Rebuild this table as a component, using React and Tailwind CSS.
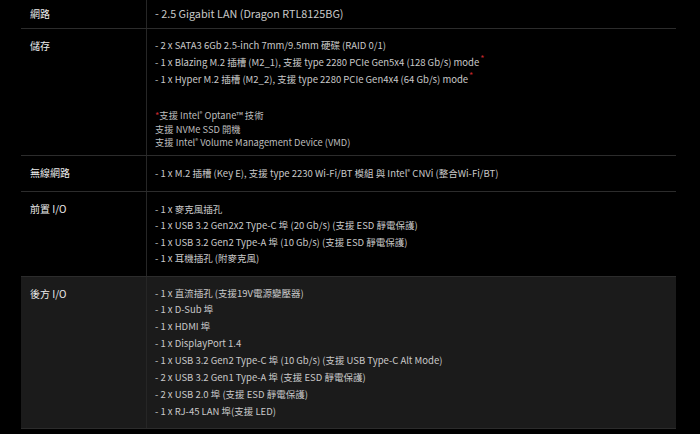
const rows = [
  {
    label: "網路",
    lines: ["- 2.5 Gigabit LAN (Dragon RTL8125BG)"],
  },
  {
    label: "儲存",
    lines: [
      "- 2 x SATA3 6Gb 2.5-inch 7mm/9.5mm 硬碟 (RAID 0/1)",
      <>
        - 1 x Blazing M.2 插槽 (M2_1), 支援 type 2280 PCIe Gen5x4 (128 Gb/s) mode
        <Star />
      </>,
      <>
        - 1 x Hyper M.2 插槽 (M2_2), 支援 type 2280 PCIe Gen4x4 (64 Gb/s) mode
        <Star />
      </>,
    ],
    notes: true,
  },
  {
    label: "無線網路",
    lines: [
      <>
        - 1 x M.2 插槽 (Key E), 支援 type 2230 Wi-Fi/BT 模組 與 Intel<Reg /> CNVi (整合Wi-Fi/BT)
      </>,
    ],
  },
  {
    label: "前置 I/O",
    lines: [
      "- 1 x 麥克風插孔",
      "- 1 x USB 3.2 Gen2x2 Type-C 埠 (20 Gb/s) (支援 ESD 靜電保護)",
      "- 1 x USB 3.2 Gen2 Type-A 埠 (10 Gb/s) (支援 ESD 靜電保護)",
      "- 1 x 耳機插孔 (附麥克風)",
    ],
  },
  {
    label: "後方 I/O",
    dark: true,
    lines: [
      "- 1 x 直流插孔 (支援19V電源變壓器)",
      "- 1 x D-Sub 埠",
      "- 1 x HDMI 埠",
      "- 1 x DisplayPort 1.4",
      "- 1 x USB 3.2 Gen2 Type-C 埠 (10 Gb/s) (支援 USB Type-C Alt Mode)",
      "- 2 x USB 3.2 Gen1 Type-A 埠 (支援 ESD 靜電保護)",
      "- 2 x USB 2.0 埠 (支援 ESD 靜電保護)",
      "- 1 x RJ-45 LAN 埠(支援 LED)",
    ],
  },
];

function Star() {
  return <sup className="ml-[1px] text-[9px] text-[#c0272d]">*</sup>;
}

function Reg() {
  return <sup className="text-[6px]">®</sup>;
}

function Notes() {
  return (
    <div className="mt-[21px] text-[9.3px] leading-[13.5px] text-[#bdbdbd]">
      <p>
        <span className="text-[#c0272d]">*</span>支援 Intel<Reg /> Optane™ 技術
      </p>
      <p>支援 NVMe SSD 開機</p>
      <p>
        支援 Intel<Reg /> Volume Management Device (VMD)
      </p>
    </div>
  );
}

export default function App() {
  return (
    <div
      className="h-[434px] w-[700px] overflow-hidden bg-black"
      style={{ fontFamily: '"Noto Sans CJK TC", "Noto Sans", sans-serif' }}
    >
      <div className="ml-[21px] w-[655px]">
        {rows.map((row, i) => (
          <div
            key={row.label}
            className={`flex border-b border-[#2c2c2c] ${row.dark ? "bg-[#1b1b1b]" : ""}`}
          >
            <div
              className={`w-[126px] shrink-0 border-r border-[#262626] pl-[9px] text-[10px] leading-[17px] text-[#ececec] ${
                i === 0 ? "pt-[5px] pb-[6px]" : "py-[8px]"
              }`}
            >
              {row.label}
            </div>
            <div
              className={`flex-1 pl-[8px] text-[#c9c9c9] ${
                i === 0
                  ? "pt-[5px] pb-[6px] text-[10.8px] leading-[17px]"
                  : row.notes
                    ? "pt-[8px] pb-[5px] text-[9.5px] leading-[17px]"
                    : row.dark
                      ? "py-[8px] text-[9.5px] leading-[16.9px]"
                      : i === 2
                        ? "py-[9px] text-[9.5px] leading-[17px]"
                        : "py-[9px] text-[9.5px] leading-[16.5px]"
              }`}
            >
              {row.lines.map((line, j) => (
                <p key={j}>{line}</p>
              ))}
              {row.notes && <Notes />}
            </div>
          </div>
        ))}
      </div>
    </div>
  );
}
